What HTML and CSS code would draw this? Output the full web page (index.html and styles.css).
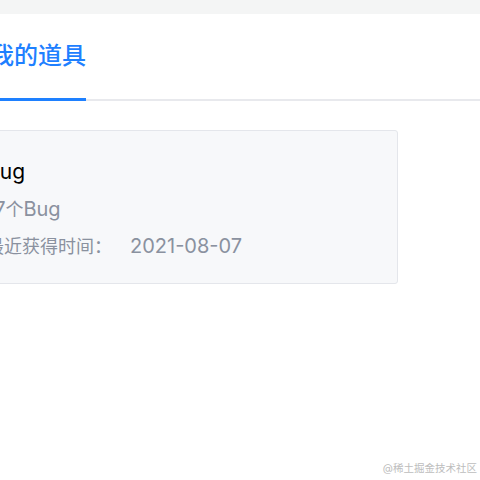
FILE: index.html
```html
<!DOCTYPE html>
<html lang="zh">
  <head>
    <meta charset="utf-8">
    <meta name="viewport" content="width=device-width, initial-scale=1.0" />
    <link rel="stylesheet" href="styles.css">
  </head>
  <body>
    <div class="topbar"></div>

    <div class="tabs">
      <div class="tab tab-active">我的道具</div>
    </div>

    <div class="props">
      <div class="prop-card">
        <div class="prop-name">Bug</div>
        <div class="prop-line"><span class="latin">17</span>个<span class="latin">Bug</span></div>
        <div class="prop-line">最近获得时间：<span class="latin prop-date">2021-08-07</span></div>
      </div>
    </div>

    <div class="watermark">@稀土掘金技术社区</div>
  </body>
</html>
```

FILE: styles.css
```css
html, body {
  margin: 0;
  padding: 0;
  background: #fff;
  overflow: hidden;
}
body {
  width: 480px;
  height: 480px;
  font-family: Inter, "Noto Sans CJK SC", sans-serif;
  position: relative;
}
* {
  box-sizing: border-box;
}

.topbar {
  height: 14px;
  background: #f4f5f5;
}

.tabs {
  display: flex;
  border-bottom: 2px solid #e8e9ed;
}
.tab {
  margin-left: -10px;
  padding: 27px 0 27px 0;
  font-size: 24px;
  line-height: 30px;
  font-weight: 500;
  color: #1e80ff;
  white-space: nowrap;
}
.tab-active {
  border-bottom: 3px solid #1e80ff;
  margin-bottom: -2px;
}

.props {
  padding-top: 29px;
}
.prop-card {
  margin-left: -31px;
  width: 429px;
  padding: 26px 16px 18px;
  background: #f7f8fa;
  border: 1px solid #e4e6eb;
  border-radius: 3px;
}
.prop-name {
  font-size: 21px;
  line-height: 30px;
  color: #000;
  margin-bottom: 4px;
}
.prop-line {
  font-size: 18px;
  line-height: 37px;
  height: 37px;
  color: #8a919f;
  white-space: nowrap;
}
.latin {
  font-size: 20px;
}
.prop-date {
  margin-left: 18px;
}

.watermark {
  position: absolute;
  right: 3px;
  bottom: 4px;
  font-size: 10.5px;
  line-height: 14px;
  color: #bdbdbd;
}
```
